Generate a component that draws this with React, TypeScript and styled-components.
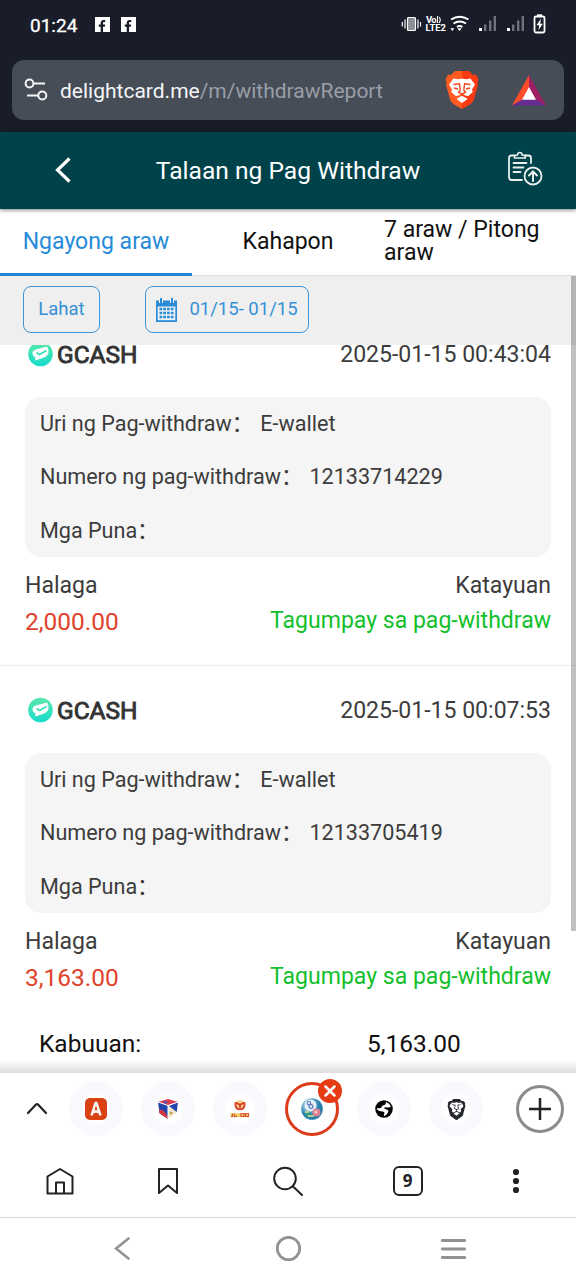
import React from 'react';
import styled, { createGlobalStyle } from 'styled-components';
import { SiBrave } from 'react-icons/si';
import { FaFacebookF } from 'react-icons/fa';

const Global = createGlobalStyle`
  *, *::before, *::after { box-sizing: border-box; }
  body { margin: 0; background: #fff; font-family: Roboto, "Noto Sans CJK SC", sans-serif; }
  svg { display: block; flex: none; }
`;

const Screen = styled.div`
  width: 576px;
  height: 1280px;
  display: flex;
  flex-direction: column;
  overflow: hidden;
  background: #fff;
  white-space: nowrap;
`;

const BrowserTop = styled.div`
  height: 132px;
  flex: none;
  background: #191d29;
  padding: 0 12px;
`;

const StatusBar = styled.div`
  height: 60px;
  padding: 0 16px 12px 18px;
  display: flex;
  align-items: center;
  justify-content: space-between;
  color: #fff;
`;

const StatusGroup = styled.div`
  display: flex;
  align-items: center;
`;

const Clock = styled.span`
  font-size: 19px;
  font-weight: 400;
  -webkit-text-stroke: 0.3px #fff;
  width: 47px;
  margin-right: 18px;
  padding-top: 2px;
`;

const Facebook = styled.span`
  width: 15px;
  height: 15px;
  margin-right: 11px;
  background: #fff;
  color: #191d29;
  display: flex;
  align-items: flex-end;
  justify-content: flex-end;
  padding-right: 2px;
`;

const AddressBar = styled.div`
  height: 60px;
  border-radius: 12px;
  background: #464d57;
  display: flex;
  align-items: center;
  padding: 0 18px 0 12px;
`;

const Url = styled.div`
  flex: 1;
  margin-left: 12px;
  font-size: 21px;
  line-height: 28px;
  padding-top: 2px;
  color: #f4f5f7;
`;

const UrlPath = styled.span`
  color: #9a9ea8;
`;

const ShieldWrap = styled.div`
  margin-right: 33px;
`;

const PageHeader = styled.header`
  height: 77px;
  flex: none;
  background: #004249;
  color: #fff;
  display: grid;
  grid-template-columns: 126px 324px 126px;
  align-items: center;
  box-shadow: 0 1px 4px rgba(0, 0, 0, 0.5);
  position: relative;
  z-index: 1;
`;

const HeaderButton = styled.div<{ $end?: boolean }>`
  display: flex;
  justify-content: ${(p) => (p.$end ? 'flex-end' : 'center')};
  padding: ${(p) => (p.$end ? '0 33px 6px 0' : '0 0 2px')};
`;

const Title = styled.h1`
  margin: 0;
  font-size: 24.6px;
  font-weight: 400;
  line-height: 30px;
  text-align: center;
`;

const Tabs = styled.nav`
  height: 67px;
  flex: none;
  display: grid;
  grid-template-columns: repeat(3, 192px);
  border-bottom: 1px solid #ddd;
`;

const Tab = styled.div<{ $active?: boolean; $wrap?: boolean }>`
  display: flex;
  align-items: center;
  justify-content: ${(p) => (p.$wrap ? 'flex-start' : 'center')};
  font-size: 23.04px;
  line-height: 23px;
  height: 67px;
  padding-top: ${(p) => (p.$wrap ? 0 : 1)}px;
  color: ${(p) => (p.$active ? '#268bd8' : '#111')};
  border-bottom: 3px solid ${(p) => (p.$active ? '#2583cf' : 'transparent')};
`;

const Report = styled.main`
  height: 797px;
  flex: none;
  position: relative;
  display: flex;
  flex-direction: column;
`;

const Filters = styled.div`
  height: 69px;
  flex: none;
  background: #efefef;
  display: flex;
  gap: 45px;
  padding: 10px 23px;
`;

const FilterButton = styled.div<{ $width: number }>`
  width: ${(p) => p.$width}px;
  height: 47px;
  border: 1px solid #3a94d6;
  border-radius: 8px;
  color: #3490d6;
  font-size: 18.5px;
  display: flex;
  align-items: center;
  justify-content: center;
  gap: 12px;
`;

const FilterLabel = styled.span`
  padding-bottom: 2px;
`;

const Scroller = styled.div`
  flex: 1;
  overflow: hidden;
`;

const List = styled.div`
  margin-top: -35px;
`;

const Record = styled.section<{ $last?: boolean }>`
  height: ${(p) => (p.$last ? 357 : 356)}px;
  padding: 0 25px;
  color: #3c3c3c;
  border-bottom: 1px solid ${(p) => (p.$last ? 'transparent' : '#eee')};
`;

const RecordHead = styled.div`
  height: 87px;
  display: flex;
  align-items: center;
  font-size: 23.04px;
  padding-top: 1px;
`;

const Bank = styled.span`
  margin-left: 3px;
  flex: 1;
  font-size: 24.48px;
  -webkit-text-stroke: 0.9px #333;
  color: #333;
`;

const Details = styled.div`
  height: 160px;
  border-radius: 16px;
  background: #f5f5f5;
  padding: 0 15px;
  display: grid;
  grid-template-rows: repeat(3, 53.5px);
  align-items: center;
  font-size: 21.6px;
  letter-spacing: -0.02px;
  line-height: 30px;
`;

const Detail = styled.div`
  display: flex;
`;

const Summary = styled.div`
  display: flex;
  justify-content: space-between;
  padding-top: 11px;
  font-size: 23.04px;
`;

const SummaryCol = styled.div<{ $right?: boolean }>`
  display: flex;
  flex-direction: column;
  line-height: 36px;
  text-align: ${(p) => (p.$right ? 'right' : 'left')};
`;

const Amount = styled.span`
  color: #e0432b;
  font-size: 24.48px;
`;

const State = styled.span`
  color: #12c02c;
  line-height: 34px;
`;

const Total = styled.div`
  display: grid;
  grid-template-columns: 328px 1fr;
  padding: 4px 39px 0;
  font-size: 24.48px;
  line-height: 34px;
  color: #111;
`;

const ScrollThumb = styled.div`
  position: absolute;
  top: 0;
  right: 0;
  width: 5px;
  height: 655px;
  background: rgba(0, 0, 0, 0.25);
`;

const BottomShade = styled.div`
  position: absolute;
  left: 0;
  right: 0;
  bottom: 0;
  height: 13px;
  background: linear-gradient(rgba(0, 0, 0, 0), rgba(0, 0, 0, 0.13));
`;

const TabStrip = styled.div`
  height: 72px;
  flex: none;
  display: flex;
  align-items: center;
  padding: 0 12px 0 24px;
`;

const Expand = styled.div`
  width: 36px;
`;

const SiteTabs = styled.div`
  flex: 1;
  display: grid;
  grid-template-columns: repeat(6, 72px);
  justify-items: center;
`;

const SiteTab = styled.div<{ $active?: boolean }>`
  width: 54px;
  height: 54px;
  border-radius: 50%;
  position: relative;
  display: flex;
  align-items: center;
  justify-content: center;
  background: ${(p) => (p.$active ? '#fff' : 'radial-gradient(#fff 13px, #f8f9fd 17px)')};
  border: ${(p) => (p.$active ? '3px solid #dc3b1c' : 'none')};
`;

const CloseBadge = styled.div`
  position: absolute;
  right: -6px;
  top: -6px;
  width: 24px;
  height: 24px;
  border-radius: 50%;
  background: #e63a12;
  display: flex;
  align-items: center;
  justify-content: center;
`;

const AddTab = styled.div`
  width: 48px;
  height: 48px;
  border: 3px solid #8c8c8c;
  border-radius: 50%;
  display: flex;
  align-items: center;
  justify-content: center;
`;

const Toolbar = styled.div`
  height: 73px;
  flex: none;
  display: grid;
  grid-template-columns: 120px 95px 145px 95px 121px;
  align-items: center;
  justify-items: center;
  border-bottom: 1px solid #d8d8d8;
`;

const TabCount = styled.div`
  width: 30px;
  height: 30px;
  border: 2px solid #222;
  border-radius: 6px;
  font-family: "Noto Sans", sans-serif;
  font-size: 17px;
  font-weight: 700;
  line-height: 25px;
  text-align: center;
  color: #222;
`;

const SystemNav = styled.div`
  height: 62px;
  flex: none;
  display: grid;
  grid-template-columns: 246px 84px 246px;
  align-items: center;
  justify-items: center;
`;

const StatusIcons = () => (
  <svg width="148" height="24" viewBox="400 12 148 24" fill="none">
    <g stroke="#fff" strokeWidth="1.2">
      <rect x="407.5" y="17.5" width="8" height="13" rx="1" fill="#8b8e96" />
      <path d="M405 19.500v9M418 19.500v9M402.300 22v4.500M420.500 22v4.500" />
    </g>
    <g fill="#fff" fontFamily="Roboto, sans-serif" fontWeight="700">
      <text x="426" y="23" fontSize="9.500" textLength="10.500">Vo</text>
      <text x="425.500" y="31.300" fontSize="9.500" textLength="20.500" lengthAdjust="spacingAndGlyphs">LTE2</text>
    </g>
    <path d="M437.500 16v7M439 17q2.500 3 0 6" stroke="#fff" strokeWidth="1.100" />
    <g stroke="#fff" strokeWidth="1.900">
      <path d="M451 19.500q8.700-5.500 17.500 0M453.500 23.500q6.200-4 12.500 0M457 27q2.700-2 5.400 0" />
    </g>
    <path d="M450.300 28.300h4l-2 2.600zM457.300 28.300h4.400l-2.200 2.600z" fill="#fff" />
    {[479, 507].map((x) => (
      <g key={x}>
        <path d={`M${x} 28h3v3h-3z`} fill="#fff" />
        <path d={`M${x + 5} 24.500h2.400v6.500h-2.400zM${x + 10} 20.500h2.400v10.500h-2.400zM${x + 14.600} 16h2.400v15h-2.400z`} fill="#6f737d" />
      </g>
    ))}
    <rect x="534.500" y="16.500" width="10" height="16" rx="1.500" stroke="#fff" strokeWidth="1.800" />
    <path d="M537 14.300h5v2h-5z" fill="#fff" />
    <path d="M541 18.500l-4.500 6.700h2.700l-.7 5 4.300-6.500h-2.600z" fill="#fff" />
  </svg>
);

const SiteInfoIcon = () => (
  <svg width="24" height="24" viewBox="24 78 24 24" fill="none" stroke="#f4f5f7" strokeWidth="2">
    <circle cx="29.500" cy="83.500" r="3.900" />
    <path d="M33.500 83.500H45M27 95.500h11" />
    <circle cx="42.300" cy="95.500" r="4" />
  </svg>
);

const BraveShield = () => (
  <svg width="34" height="40" viewBox="0 0 34 40">
    <defs>
      <linearGradient id="brave" x1="0" x2="1">
        <stop offset=".5" stopColor="#ff5a1f" />
        <stop offset=".5" stopColor="#fb3a12" />
      </linearGradient>
    </defs>
    <path d="M10 1h14l4 4 3-.5 2.500 5-1 3 .5 2-4 15q-1 3-4 5L17 39l-8-4.500q-3-2-4-5L1 14.500l.5-2-1-3L3 4.500 6 5z" fill="url(#brave)" />
    <path d="M8.500 8.500l4.500.7L17 8.500l4 .7 4.500-.7 4.500 6-3 5 .8 2.500-4.800 4.200-2.500-.7-3.500-2-3.500 2-2.500.7-4.800-4.200.8-2.500-3-5z" fill="#fff" />
    <path d="M12 28.500l5-2.700 5 2.700v1l-5 3.500-5-3.500z" fill="#fff" />
    <path d="M8.500 14.500l6.500-.7M25.500 14.500l-6.500-.7M14.500 14l.7 6-1.700 2.200 3.500 2 3.500-2-1.700-2.200.7-6M17 24v2" stroke="#f4481c" strokeWidth="1.400" fill="none" />
    <path d="M9 18l4 1M25 18l-4 1" stroke="#f4481c" strokeWidth="1.600" />
  </svg>
);

const BatIcon = () => (
  <svg width="34" height="31" viewBox="0 0 34 31">
    <path d="M17 0L0 30.500l11-5.500L17 14z" fill="#ff4c2b" />
    <path d="M17 0l17 30.500L23 25l-6-11z" fill="#9e1f63" />
    <path d="M0 30.500h34L23 24H11z" fill="#662d91" />
    <path d="M17 12l7 12.700H10z" fill="#fff" />
  </svg>
);

const RecordsIcon = () => (
  <svg width="36" height="36" viewBox="0 0 36 36" fill="none" stroke="#e9f0f0" strokeWidth="1.800" strokeLinecap="round">
    <path d="M7 5.500H4.500Q2 5.500 2 8v19q0 3 2.500 3H15M18 5.500h3.500Q24 5.500 24 8v5" />
    <path d="M7.500 8V5.500L10.500 5q.3-2.500 2.300-2.500T15.200 5l3 .5V8z" strokeWidth="1.600" />
    <path d="M6.500 13h13M6.500 17.500h10M6.500 22h7" />
    <circle cx="26" cy="26" r="8.500" />
    <path d="M26 31V22M22 25.500l4-4 4 4" strokeWidth="2" />
  </svg>
);

const CalendarIcon = () => (
  <svg width="21" height="24" viewBox="0 0 21 24">
    <path d="M0 2.500h3V5h4V2.500h7V5h4V2.500h3V24H0z" fill="#2c8cd6" />
    <path d="M4 0h2v5H4zM15 0h2v5h-2z" fill="#2c8cd6" />
    <path d="M1.700 8.500h17.600v13.700H1.700z" fill="#eff3f6" />
    <path d="M3.500 11h14M3.500 15h14M3.500 19h14" stroke="#2c8cd6" strokeWidth="2.600" strokeDasharray="2.700 1.070" />
  </svg>
);

const BankLogo = () => (
  <svg width="29" height="26" viewBox="0 0 29 26">
    <defs>
      <linearGradient id="mint" x1="0" y1="0" x2="0" y2="1">
        <stop stopColor="#5be8ac" />
        <stop offset="1" stopColor="#18dccb" />
      </linearGradient>
    </defs>
    <circle cx="15.500" cy="13" r="12.300" fill="url(#mint)" />
    <path d="M7.500 12q0-3 5-4 5-1.500 9.500-2.500 2 2.500 1.500 6-1 4.500-7 6-3.500 1-6.500 2l.5-3Q7.500 15 7.500 12z" fill="#fff" />
    <path d="M11.500 11.500l3 2 7-4" fill="none" stroke="#34dfbc" strokeWidth="1.600" />
  </svg>
);

const RedSite = () => (
  <svg width="22" height="22" viewBox="0 0 22 22">
    <rect width="22" height="22" rx="5" fill="#da4215" />
    <path d="M6.500 17.500L10.500 5h1L15.500 17.500M8.500 14.500L11 13l2.500 1.500" fill="none" stroke="#fff" strokeWidth="2.400" strokeLinejoin="round" />
  </svg>
);

const CubeSite = () => (
  <svg width="22" height="20" viewBox="0 0 22 20">
    <path d="M1 3L11 0l10 3-10 3.500z" fill="#dc3a4b" />
    <path d="M6 1.500l5 1.700L8 5z" fill="#3659c0" />
    <path d="M1 3l10 3.500V20L2.500 14z" fill="#2446ac" />
    <path d="M2 10l5 2 4 6v2L2.500 14.500z" fill="#d33744" />
    <path d="M21 3L11 6.500V20l8.500-6z" fill="#f1ead1" />
    <path d="M21 3l-9 4 7.700 6z" fill="#2446ac" />
    <path d="M1 3l10 3.500L21 3M11 6.500V20" fill="none" stroke="#fff" strokeWidth="1" />
    <circle cx="14" cy="14" r="1.500" fill="#c6a24c" />
  </svg>
);

const GoldSite = () => (
  <svg width="20" height="18" viewBox="0 0 20 18">
    <circle cx="10" cy="5" r="5" fill="#f7d792" />
    <path d="M5.500 3q3.500 0 4.500 3 1-3 4.500-3 .5 4-2 6-1.500 1-2.500-1-1 2-2.500 1-2.500-2-2-6z" fill="none" stroke="#d5482b" strokeWidth="1.900" />
    <path d="M.5 15.200h18" stroke="#f2ce6a" strokeWidth="4" />
    <path d="M1 16.500h1.500v-3M4.500 13.500v3h2.500M11 13.500h3v3h-3zM15.500 13.500h3v3h-3z" fill="none" stroke="#d5562f" strokeWidth="1.200" />
  </svg>
);

const BallSite = () => (
  <svg width="22" height="22" viewBox="0 0 22 22">
    <defs>
      <radialGradient id="ball" cx=".35" cy=".3">
        <stop stopColor="#cdeef7" />
        <stop offset="1" stopColor="#257eab" />
      </radialGradient>
    </defs>
    <circle cx="11" cy="11" r="10.800" fill="url(#ball)" />
    <circle cx="9.500" cy="7.500" r="6" fill="#e2f1f8" />
    <circle cx="8" cy="5.200" r="1.700" fill="none" stroke="#5a7abc" strokeWidth="1.200" />
    <circle cx="10" cy="8.500" r="1.900" fill="none" stroke="#5a7abc" strokeWidth="1.200" />
    <circle cx="15.500" cy="14.500" r="4" fill="#df7f92" />
    <circle cx="15" cy="14" r="1.500" fill="#f6cdd2" />
    <circle cx="7" cy="16.500" r="3" fill="#2e9b93" />
    <path d="M4 14h4M7 18h6" stroke="#eadf8c" strokeWidth="1.500" />
  </svg>
);

const GlobeSite = () => (
  <svg width="18" height="18" viewBox="0 0 18 18">
    <circle cx="9" cy="9" r="8.800" fill="#050505" />
    <path d="M11 2q3.500 1 5 4.500-2.500 1.500-4.500.8Q9 7 9.200 8.200q.3 1 2.300 1.200 3 1 1.300 3.300Q11.500 15.500 9 16q-.5-1.500.3-2.800.7-1.700-1.800-1.700-3.500 0-5.700-2.200.2-1 .8-1.300Q6 9 6.700 6.800 7.200 5 9.500 5 11 4.500 11 2z" fill="#fff" />
  </svg>
);

const CloseIcon = () => (
  <svg width="12" height="12" viewBox="0 0 12 12" stroke="#fff" strokeWidth="2.500" strokeLinecap="round">
    <path d="M1.500 1.500l9 9M10.500 1.500l-9 9" />
  </svg>
);

const sites = [
  { id: 'red', icon: <RedSite /> },
  { id: 'cube', icon: <CubeSite /> },
  { id: 'gold', icon: <GoldSite /> },
  { id: 'ball', icon: <BallSite />, active: true },
  { id: 'globe', icon: <GlobeSite /> },
  { id: 'brave', icon: <SiBrave size={21} color="#25282d" /> },
];

const records = [
  { time: '2025-01-15 00:43:04', number: '12133714229', amount: '2,000.00' },
  { time: '2025-01-15 00:07:53', number: '12133705419', amount: '3,163.00' },
];

const Value = styled.span`
  margin-left: 7px;
`;

export default function App() {
  return (
    <Screen>
      <Global />
      <BrowserTop>
        <StatusBar>
          <StatusGroup>
            <Clock>01:24</Clock>
            <Facebook><FaFacebookF size={12} /></Facebook>
            <Facebook><FaFacebookF size={12} /></Facebook>
          </StatusGroup>
          <StatusIcons />
        </StatusBar>
        <AddressBar>
          <SiteInfoIcon />
          <Url>delightcard.me<UrlPath>/m/withdrawReport</UrlPath></Url>
          <ShieldWrap><BraveShield /></ShieldWrap>
          <BatIcon />
        </AddressBar>
      </BrowserTop>

      <PageHeader>
        <HeaderButton>
          <svg width="18" height="28" viewBox="0 0 18 28" fill="none" stroke="#fff" strokeWidth="3.200">
            <path d="M15.500 2.500L3.500 14l12 11.500" />
          </svg>
        </HeaderButton>
        <Title>Talaan ng Pag Withdraw</Title>
        <HeaderButton $end><RecordsIcon /></HeaderButton>
      </PageHeader>

      <Tabs>
        <Tab $active>Ngayong araw</Tab>
        <Tab>Kahapon</Tab>
        <Tab $wrap>7 araw / Pitong<br />araw</Tab>
      </Tabs>

      <Report>
        <Filters>
          <FilterButton $width={77}><FilterLabel>Lahat</FilterLabel></FilterButton>
          <FilterButton $width={164}><CalendarIcon /><FilterLabel>01/15- 01/15</FilterLabel></FilterButton>
        </Filters>
        <Scroller>
          <List>
            {records.map((r, i) => (
              <Record key={r.number} $last={i === records.length - 1}>
                <RecordHead>
                  <BankLogo />
                  <Bank>GCASH</Bank>
                  <span>{r.time}</span>
                </RecordHead>
                <Details>
                  <Detail>Uri ng Pag-withdraw：<Value>E-wallet</Value></Detail>
                  <Detail>Numero ng pag-withdraw：<Value>{r.number}</Value></Detail>
                  <Detail>Mga Puna：</Detail>
                </Details>
                <Summary>
                  <SummaryCol>
                    <span>Halaga</span>
                    <Amount>{r.amount}</Amount>
                  </SummaryCol>
                  <SummaryCol $right>
                    <span>Katayuan</span>
                    <State>Tagumpay sa pag-withdraw</State>
                  </SummaryCol>
                </Summary>
              </Record>
            ))}
            <Total>
              <span>Kabuuan:</span>
              <span>5,163.00</span>
            </Total>
          </List>
        </Scroller>
        <ScrollThumb />
        <BottomShade />
      </Report>

      <TabStrip>
        <Expand>
          <svg width="26" height="16" viewBox="0 0 26 16" fill="none" stroke="#222" strokeWidth="2.200" strokeLinecap="round">
            <path d="M4 12l8-8.500q1-1 2 0L22 12" />
          </svg>
        </Expand>
        <SiteTabs>
          {sites.map((s) => (
            <SiteTab key={s.id} $active={s.active}>
              {s.icon}
              {s.active && <CloseBadge><CloseIcon /></CloseBadge>}
            </SiteTab>
          ))}
        </SiteTabs>
        <AddTab>
          <svg width="24" height="24" viewBox="0 0 24 24" stroke="#222" strokeWidth="2.500">
            <path d="M12 1v22M1 12h22" />
          </svg>
        </AddTab>
      </TabStrip>

      <Toolbar>
        <svg width="28" height="28" viewBox="0 0 28 28" fill="none" stroke="#222" strokeWidth="2" strokeLinejoin="round">
          <path d="M1.500 9.500L14 2 26.500 9.500v17h-25zM10 26.500V15.500h8v11" />
        </svg>
        <svg width="20" height="28" viewBox="0 0 20 28" fill="none" stroke="#222" strokeWidth="2" strokeLinejoin="round">
          <path d="M1 2h18v24l-9-7.500L1 26z" />
        </svg>
        <svg width="32" height="32" viewBox="0 0 32 32" fill="none" stroke="#222" strokeWidth="2" strokeLinecap="round">
          <circle cx="13" cy="13.500" r="10.800" />
          <path d="M21 21.500l9 8.500" />
        </svg>
        <TabCount>9</TabCount>
        <svg width="8" height="26" viewBox="0 0 8 26" fill="#222">
          <circle cx="4" cy="4" r="3.100" />
          <circle cx="4" cy="13" r="3.100" />
          <circle cx="4" cy="22" r="3.100" />
        </svg>
      </Toolbar>

      <SystemNav>
        <svg width="18" height="24" viewBox="0 0 18 24" fill="none" stroke="#929292" strokeWidth="2.600" strokeLinecap="round">
          <path d="M14.500 1.500L2 11.500l12.500 10" />
        </svg>
        <svg width="26" height="26" viewBox="0 0 26 26" fill="none" stroke="#929292" strokeWidth="2.800">
          <circle cx="13.500" cy="12.500" r="11.200" />
        </svg>
        <svg width="26" height="22" viewBox="0 0 26 22" fill="none" stroke="#929292" strokeWidth="2.800" strokeLinecap="round">
          <path d="M2.200 2.500h22.500M2.200 11h22.500M2.200 19.500h22.500" />
        </svg>
      </SystemNav>
    </Screen>
  );
}
